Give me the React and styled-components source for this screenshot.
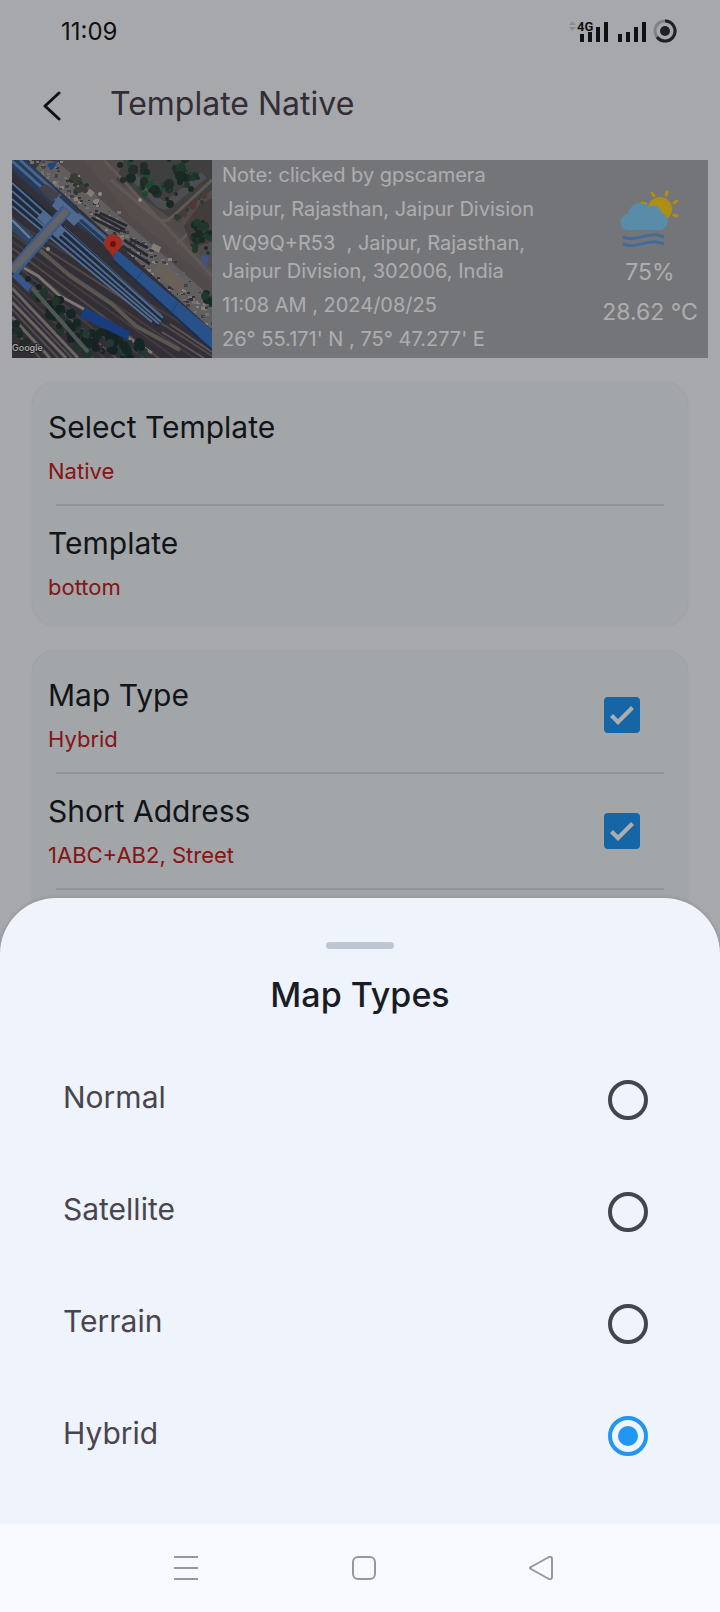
import React, { useState } from "react";
import styled, { createGlobalStyle } from "styled-components";

const GlobalStyle = createGlobalStyle`
  *, *::before, *::after { box-sizing: border-box; }
  body { margin: 0; background: #f8f9fe; font-family: Inter, "Open Sans", sans-serif; }
  h1, h2, h3, p { margin: 0; font-weight: 400; }
`;

const Shell = styled.div`
  display: grid;
  grid-template: minmax(100vh, auto) / minmax(0, 1fr);
`;

const Screen = styled.main`
  grid-area: 1 / 1;
  isolation: isolate;
  display: flex;
  flex-direction: column;
  background: #f7f8fe;
  min-width: 0;
`;

const Overlay = styled.div`
  grid-area: 1 / 1;
  z-index: 1;
  display: flex;
  flex-direction: column;
  justify-content: flex-end;
  background: rgba(0, 0, 0, 0.32);
`;

const StatusBar = styled.div`
  display: flex;
  align-items: center;
  justify-content: space-between;
  height: 64px;
  padding: 0 42px 0 61px;
  font-size: 24px;
  line-height: 28px;
  color: #17191a;
`;

const AppBar = styled.header`
  display: flex;
  align-items: center;
  gap: 42px;
  height: 80px;
  padding-left: 36px;
  margin-bottom: 16px;
`;

const BackButton = styled.button`
  display: grid;
  place-items: center;
  width: 32px;
  height: 40px;
  padding: 0;
  border: 0;
  background: none;
`;

const PageTitle = styled.h1`
  font-size: 32px;
  line-height: 40px;
  color: #4b454e;
`;

const Stamp = styled.section`
  display: flex;
  height: 198px;
  margin: 0 12px 24px;
  background: #acadb3;
  color: #fff;
`;

const MapDrawing = styled.svg`
  flex: none;
  width: 200px;
  height: 198px;
`;

const StampText = styled.div`
  flex: 1;
  min-width: 0;
  display: flex;
  flex-direction: column;
  gap: 6px;
  padding: 1px 0 0 10px;
  font-size: 20px;
  line-height: 28px;
  white-space: pre-line;
`;

const Weather = styled.div`
  display: flex;
  flex-direction: column;
  align-items: center;
  width: 96px;
  margin-right: 10px;
  padding-top: 28px;
  font-size: 23px;
  line-height: 40px;
  font-weight: 300;
  white-space: nowrap;
`;

const Card = styled.section`
  flex: ${(p) => (p.$fill ? 1 : "none")};
  margin: 0 32px ${(p) => (p.$fill ? 0 : 24)}px;
  padding: 8px 24px 4px;
  border-radius: ${(p) => (p.$fill ? "24px 24px 0 0" : "24px")};
  background: #f0f5fa;
  box-shadow: 0 0 1px #c9cdd2;
`;

const Setting = styled.div`
  display: flex;
  align-items: center;
  justify-content: space-between;
  height: 116px;
  padding-right: 24px;
  border-bottom: 2px solid ${(p) => (p.$last ? "transparent" : "#d8dde2")};
`;

const SettingText = styled.div`
  display: flex;
  flex-direction: column;
  gap: 2px;
  padding-top: 2px;
  margin-left: -8px;
`;

const SettingTitle = styled.h2`
  font-size: 30px;
  line-height: 44px;
  color: #1a1e25;
`;

const SettingValue = styled.p`
  font-size: 22px;
  line-height: 40px;
  color: #c62023;
`;

const Checkbox = styled.input`
  appearance: none;
  width: 36px;
  height: 36px;
  margin: 0;
  border: 3px solid #434651;
  border-radius: 4px;
  &:checked {
    border: 0;
    background: #2196f3;
  }
  &:checked::before {
    content: "";
    display: block;
    width: 36px;
    height: 36px;
    background: #fff;
    clip-path: polygon(6px 20px, 9px 17px, 14px 22px, 27px 9px, 30px 12px, 14px 28px);
  }
`;

const Sheet = styled.section`
  padding: 44px 0 32px;
  border-radius: 56px 56px 0 0;
  background: #eff3fc;
  box-shadow: 0 0 4px rgba(0, 0, 0, 0.18);
`;

const Handle = styled.div`
  width: 68px;
  height: 7px;
  margin: 0 auto 22px;
  border-radius: 4px;
  background: #bec6d4;
`;

const SheetTitle = styled.h2`
  margin-bottom: 25px;
  font-size: 34px;
  line-height: 48px;
  font-weight: 500;
  text-align: center;
  color: #191c24;
`;

const Option = styled.label`
  display: flex;
  align-items: center;
  justify-content: space-between;
  height: 112px;
  padding: 0 72px 0 63px;
  font-size: 30px;
  line-height: 40px;
  color: #49454f;
`;

const OptionLabel = styled.span`
  padding-bottom: 7px;
`;

const Radio = styled.input`
  appearance: none;
  display: grid;
  place-items: center;
  width: 40px;
  height: 40px;
  margin: 0;
  border: 4px solid #434651;
  border-radius: 50%;
  &:checked { border-color: #2196f3; }
  &:checked::before {
    content: "";
    width: 20px;
    height: 20px;
    border-radius: 50%;
    background: #2196f3;
  }
`;

const NavBar = styled.nav`
  display: flex;
  align-items: center;
  justify-content: space-between;
  height: 88px;
  padding: 0 21% 0 22%;
  background: #f8f9fe;
`;

const NavButton = styled.button`
  display: grid;
  place-items: center;
  width: 56px;
  height: 56px;
  padding: 0;
  border: 0;
  background: none;
`;

const seeded = (seed) => () => {
  seed = (seed * 16807) % 2147483647;
  return seed / 2147483647;
};

const scatter = (count, seed, [x0, y0], [x1, y1], spread, colors, size) => {
  const rand = seeded(seed);
  return Array.from({ length: count }, (_, i) => {
    const t = rand();
    return {
      x: Math.round(x0 + (x1 - x0) * t + (rand() - 0.5) * spread),
      y: Math.round(y0 + (y1 - y0) * t + (rand() - 0.5) * spread),
      r: 1 + Math.round(rand() * size),
      c: colors[i % colors.length],
    };
  });
};

const plaza = scatter(420, 77, [28, 8], [200, 160], 30, ["#aaa6a4", "#656267", "#c4bdb4", "#8b898d", "#4d4c55"], 2);
const trees = [
  ...scatter(70, 11, [24, 126], [75, 188], 16, ["#203a36", "#304d40", "#243236"], 4),
  ...scatter(60, 19, [80, 176], [125, 194], 20, ["#203a36", "#36554a", "#243236"], 4),
  ...scatter(34, 23, [120, 8], [160, 34], 26, ["#253d34", "#2b6b45", "#33413d"], 4),
  ...scatter(26, 31, [165, 2], [180, 24], 20, ["#253d34", "#2f5340", "#33413d"], 4),
  ...scatter(26, 37, [190, 66], [186, 86], 20, ["#253d34", "#2f5340"], 4),
  ...scatter(12, 41, [194, 134], [198, 140], 6, ["#2f5340", "#253d34"], 3),
  ...scatter(12, 43, [2, 164], [18, 192], 14, ["#253d34", "#2f4340"], 4),
  ...scatter(14, 47, [64, 20], [70, 32], 12, ["#3c4b45", "#55594f"], 3),
  ...scatter(16, 53, [165, 60], [192, 36], 6, ["#3c5b45", "#74564f"], 2),
];
const tracks = [0, 1, 2, 3, 4, 5, 6, 7, 8, 9];

const SatelliteMap = () => (
  <MapDrawing viewBox="0 0 200 198" role="img" aria-label="Satellite map">
    <rect width="200" height="198" fill="#57525b" />
    <path d="M48 0H200V146L190 140 62 30Z" fill="#786d6d" />
    <path d="M72 0H92L112 22 150 60 165 72 200 108V122L120 58Z" fill="#7f7471" />
    <path d="M112 0H200V30L160 60 150 52 104 20Z" fill="#5d5e5d" />
    <path d="M99 20 144 58Q152 64 160 57L200 20M165 84 200 50M92 0 200 116" fill="none" stroke="#8d827d" strokeWidth="3" />
    <path d="M118 13 146 42Q152 48 158 43L192 15" fill="none" stroke="#74727a" strokeWidth="8" />
    <path d="M172 66 188 44 200 38V82L180 88Z" fill="#625956" />
    <path d="M30 0 46 2 200 138V170L100 88 20 14Z" fill="#8f8b8d" />
    {plaza.map((s, i) => <rect key={i} x={s.x} y={s.y} width={s.r + 1} height={s.r} fill={s.c} />)}
    <g stroke="#3c3d48" strokeWidth="3">
      <path d="M80 58 108 72M83 54 113 70M88 53 115 66M112 80 136 96M118 79 136 88M110 86 138 104" />
    </g>
    <path d="M149 102 173 121 168 135 141 111Z" fill="#9b8f83" />
    <path d="M140 86 148 90M76 31 81 35" stroke="#c3b9ac" strokeWidth="6" />
    <path d="M188 98 198 90 194 110Z" fill="#647bb8" />
    <path d="M0 0H14L104 82 200 170V198H0Z" fill="#4b4650" />
    {tracks.map((i) => (
      <path key={i} d={`M0 ${60 + i * 7}L200 ${182 + i * 14}`} stroke={i % 3 === 1 ? "#7a6e69" : "#625b5d"} strokeWidth="2" />
    ))}
    <path d="M28 90 58 116 100 144 124 166 168 190" fill="none" stroke="#887f7a" strokeWidth="4" />
    <path d="M158 164 200 192M150 172 192 198" stroke="#857d80" strokeWidth="2" />
    <path d="M0 0H14L48 32 72 56 102 82 98 90 66 66 36 42 0 10Z" fill="#395782" />
    <path d="M0 1 44 40M8 0 48 36M66 54 101 84" stroke="#6c96d2" strokeWidth="3" />
    <path d="M62 57 98 89" stroke="#83a5d4" strokeWidth="1" />
    <path d="M26 28 34 24 48 34 40 42Z" fill="#665f69" />
    <path d="M0 20 40 54 153 158 146 167 0 48Z" fill="#2e3f5d" />
    <path d="M0 23 151 158M0 31 149 162M0 39 147 164M0 46 140 162" stroke="#7b9fce" strokeWidth="2" />
    <path d="M52 66 150 155" stroke="#5f83b8" strokeWidth="1" />
    <path d="M0 56 22 76 16 84 0 71Z" fill="#45699b" />
    <path d="M0 60 18 78" stroke="#a2bddd" strokeWidth="2" />
    <path d="M46 36 70 58 62 66 40 46ZM32 50 54 70 46 78 25 58Z" fill="#769bd2" />
    <path d="M104 89 200 170V190L101 100Z" fill="#3c78ca" />
    <path d="M130 112 124 120M166 142 160 152" stroke="#2a5eae" strokeWidth="1" />
    <path d="M101 100 200 190" stroke="#294474" strokeWidth="2" />
    <path d="M0 112 55 49" stroke="#5b86cc" strokeWidth="12" />
    <path d="M0 111 55 50" stroke="#8f9298" strokeWidth="7" />
    <path d="M0 116 4 112 20 126 16 132Z" fill="#4e80d6" />
    <path d="M12 108 26 116 48 136 72 149 140 193" fill="none" stroke="#b4afa8" strokeWidth="3" />
    <path d="M0 126 72 198H0Z" fill="#4a454d" />
    <path d="M0 128 66 198M0 142 54 198M0 157 38 198" stroke="#9d9892" strokeWidth="3" />
    <path d="M0 135 60 198M0 149 46 198M0 168 28 198" stroke="#77717a" strokeWidth="2" />
    {trees.map((s, i) => <circle key={i} cx={s.x} cy={s.y} r={s.r} fill={s.c} />)}
    <path d="M20 128 76 192" stroke="#74817c" strokeWidth="4" />
    <path d="M73 147 118 172 116 180 68 157Z" fill="#2459ba" />
    <path d="M37 3 46 2 40 10 35 6Z" fill="#2d66c5" />
    <g fill="#d6d2cc">
      <circle cx="36" cy="89" r="2" /><circle cx="128" cy="40" r="2" /><circle cx="88" cy="34" r="2" />
    </g>
    <path d="M101 98C99 90 92 90 92 83A9 9 0 0 1 110 83C110 90 103 90 101 98Z" fill="#ea4335" />
    <circle cx="101" cy="84" r="3" fill="#a31712" />
    <text x="0" y="191" fontSize="9" fontWeight="500" fill="#fff" stroke="#333" strokeWidth="2" paintOrder="stroke">Google</text>
  </MapDrawing>
);

const WeatherIcon = () => (
  <svg width="60" height="64" viewBox="0 0 60 64" aria-hidden="true">
    <circle cx="40" cy="21" r="12" fill="#ffd321" />
    <path d="M32 5 34 8M47 4 46 7M54 15 57 13M54 27 57 28M22 15 26 16" stroke="#ffd321" strokeWidth="3" strokeLinecap="round" />
    <path d="M9 42A8 8 0 0 1 8 26C10 14 24 12 29 19C34 16 40 19 42 25A9 9 0 0 1 41 42Z" fill="#82cefa" />
    <path d="M3 49C17 55 27 42 44 49M3 56C17 62 27 49 44 56" fill="none" stroke="#619fe0" strokeWidth="3" />
  </svg>
);

const StatusIcons = () => (
  <svg width="110" height="28" viewBox="0 0 110 28" aria-hidden="true">
    <path d="M1 7 4 3 8 7ZM1 9 4 13 8 9Z" fill="#d0d1d5" />
    <path d="M14 16V24M22 14V24M30 9V24M38 4V24M52 16V24M60 14V24M68 9V24M76 4V24" stroke="#17191a" strokeWidth="4" />
    <text x="9" y="13" fontFamily="Roboto, sans-serif" fontSize="13" fontWeight="700" fill="#17191a" stroke="#f7f8fe" strokeWidth="2" paintOrder="stroke">4G</text>
    <circle cx="97" cy="13" r="10" fill="none" stroke="#bebfc3" strokeWidth="3" />
    <path d="M97 3A10 10 0 1 1 89 19" fill="none" stroke="#30323a" strokeWidth="3" />
    <circle cx="97" cy="13" r="5" fill="#30323a" />
  </svg>
);

const stampLines = [
  "Note: clicked by gpscamera",
  "Jaipur, Rajasthan, Jaipur Division",
  "WQ9Q+R53\u00a0 , Jaipur, Rajasthan,\nJaipur Division, 302006, India",
  "11:08 AM , 2024/08/25",
  "26° 55.171' N , 75° 47.277' E",
];

const SettingRow = ({ id, title, value, last, checkable }) => (
  <Setting $last={last}>
    <SettingText>
      <SettingTitle id={id}>{title}</SettingTitle>
      <SettingValue>{value}</SettingValue>
    </SettingText>
    {checkable && <Checkbox type="checkbox" defaultChecked aria-labelledby={id} />}
  </Setting>
);

export default function App() {
  const [mapType, setMapType] = useState("Hybrid");
  return (
    <Shell>
      <GlobalStyle />
      <Screen>
        <StatusBar>
          <span>11:09</span>
          <StatusIcons />
        </StatusBar>
        <AppBar>
          <BackButton aria-label="Back">
            <svg width="18" height="34" viewBox="0 0 18 34" fill="none" stroke="#17191a" strokeWidth="3" strokeLinecap="round" strokeLinejoin="round">
              <path d="M16 6 2 19 16 32" />
            </svg>
          </BackButton>
          <PageTitle>Template Native</PageTitle>
        </AppBar>
        <Stamp>
          <SatelliteMap />
          <StampText>
            {stampLines.map((line) => <p key={line}>{line}</p>)}
          </StampText>
          <Weather>
            <WeatherIcon />
            <p>75%</p>
            <p>28.62 °C</p>
          </Weather>
        </Stamp>
        <Card>
          <SettingRow id="select-template" title="Select Template" value="Native" />
          <SettingRow id="template" title="Template" value="bottom" last />
        </Card>
        <Card $fill>
          <SettingRow id="map-type" title="Map Type" value="Hybrid" checkable />
          <SettingRow id="short-address" title="Short Address" value="1ABC+AB2, Street" checkable />
        </Card>
      </Screen>
      <Overlay>
        <Sheet role="dialog" aria-labelledby="sheet-title">
          <Handle />
          <SheetTitle id="sheet-title">Map Types</SheetTitle>
          {["Normal", "Satellite", "Terrain", "Hybrid"].map((name) => (
            <Option key={name}>
              <OptionLabel>{name}</OptionLabel>
              <Radio type="radio" name="map-type" value={name} checked={mapType === name} onChange={() => setMapType(name)} />
            </Option>
          ))}
        </Sheet>
        <NavBar>
          <NavButton aria-label="Recent apps">
            <svg width="24" height="24" viewBox="0 0 24 24" stroke="#97979c" strokeWidth="2"><path d="M0 1H24M0 12H24M0 23H24" /></svg>
          </NavButton>
          <NavButton aria-label="Home">
            <svg width="24" height="24" viewBox="0 0 24 24" fill="none" stroke="#97979c" strokeWidth="2"><rect x="1" y="1" width="22" height="22" rx="5" /></svg>
          </NavButton>
          <NavButton aria-label="Back to previous app">
            <svg width="24" height="24" viewBox="0 0 24 24" fill="none" stroke="#97979c" strokeWidth="2" strokeLinejoin="round"><path d="M2 11 20 1Q23 0 23 3V21Q23 24 20 23L2 13Q0 12 2 11Z" /></svg>
          </NavButton>
        </NavBar>
      </Overlay>
    </Shell>
  );
}
